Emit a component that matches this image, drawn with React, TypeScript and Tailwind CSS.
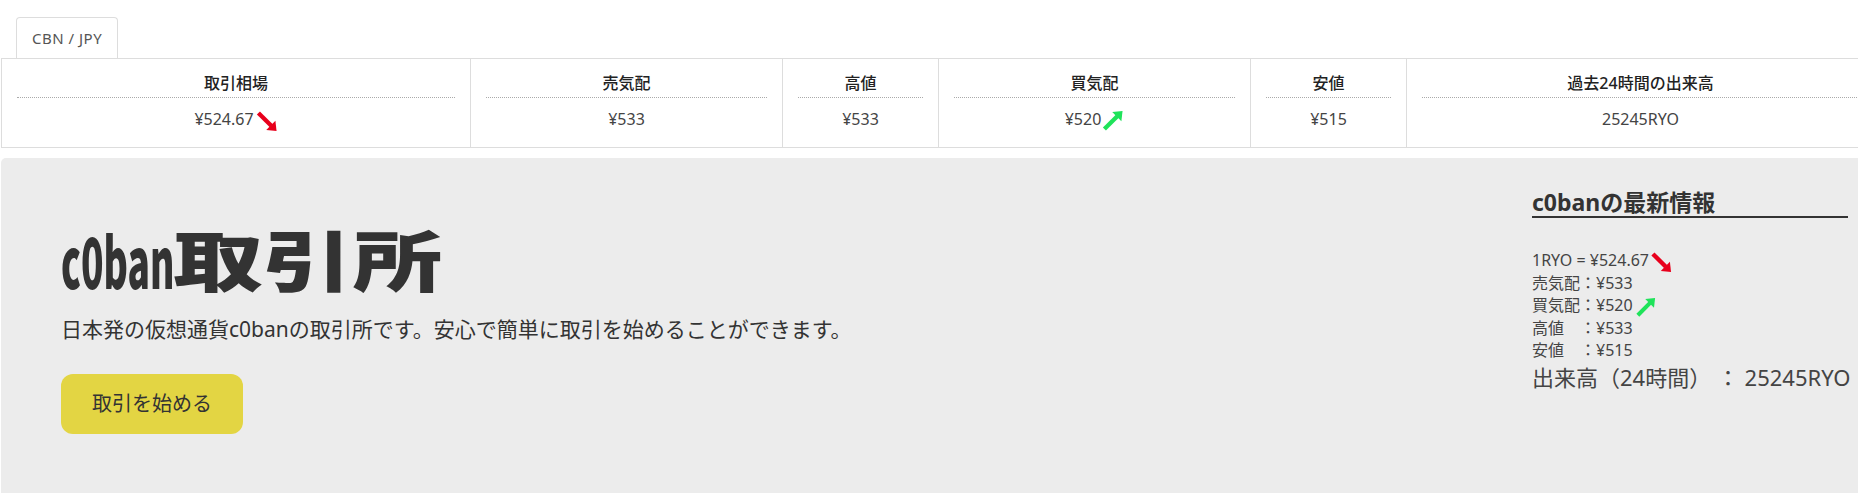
import React from "react";

function ArrowDown({ className }: { className?: string }) {
  return (
    <svg viewBox="0 0 22 22" className={className} aria-hidden="true">
      <line x1="2" y1="2" x2="15.5" y2="15.5" stroke="#e8001c" strokeWidth="4.5" />
      <polygon points="21,21 19.8,10.2 10.2,19.8" fill="#e8001c" />
    </svg>
  );
}

function ArrowUp({ className }: { className?: string }) {
  return (
    <svg viewBox="0 0 22 22" className={className} aria-hidden="true">
      <line x1="2" y1="20" x2="15.5" y2="6.5" stroke="#1fe35a" strokeWidth="4.5" />
      <polygon points="21,1 19.8,11.8 10.2,2.2" fill="#1fe35a" />
    </svg>
  );
}

const cols: { label: string; value: string; arrow?: "up" | "down" }[] = [
  { label: "取引相場", value: "¥524.67", arrow: "down" },
  { label: "売気配", value: "¥533" },
  { label: "高値", value: "¥533" },
  { label: "買気配", value: "¥520", arrow: "up" },
  { label: "安値", value: "¥515" },
  { label: "過去24時間の出来高", value: "25245RYO" },
];

export default function App() {
  return (
    <div className="w-full min-h-[493px] overflow-hidden bg-white font-['Noto_Sans','Noto_Sans_CJK_JP',sans-serif]">
      <div className="w-[1876px]">
        <div className="pt-[17px] pl-[16px] flex">
          <div className="h-[41px] px-[15px] border border-b-0 border-[#ddd] rounded-t-[4px] flex items-center text-[15px] tracking-[0.5px] text-[#555]">
            CBN / JPY
          </div>
        </div>

        <div className="ml-[1px] w-[1874px] grid grid-cols-[469px_312px_156px_312px_156px_468px] border-y border-l border-[#ddd]">
          {cols.map((c) => (
            <div key={c.label} className="h-[88px] px-[15px] border-r border-[#ddd] text-center">
              <div className="pt-[13px] pb-[3px] leading-[22px] text-[16px] font-medium text-[#222] border-b border-dotted border-[#aaa]">
                {c.label}
              </div>
              <div className="pt-[10px] leading-[22px] text-[16px] text-[#444] whitespace-nowrap">
                {c.value}
                {c.arrow === "down" && (
                  <ArrowDown className="inline-block w-[22px] h-[21px] ml-[2px] align-top translate-y-[3px]" />
                )}
                {c.arrow === "up" && (
                  <ArrowUp className="inline-block w-[22px] h-[21px] ml-[1px] align-top translate-y-[2px]" />
                )}
              </div>
            </div>
          ))}
        </div>

        <div className="mt-[10px] ml-[1px] w-[1873px] h-[340px] bg-[#ececec] rounded-[5px] flex justify-between">
          <div className="pl-[60px] pt-[66px]">
            <div className="flex items-baseline text-[#333] font-black whitespace-nowrap font-['Noto_Sans_CJK_JP',sans-serif]">
              <span className="inline-block w-[112px] text-[70px] leading-none">
                <span className="inline-block origin-left scale-x-[0.53]">c0ban</span>
              </span>
              <span className="inline-block w-[271px] text-[66px] leading-none">
                <span className="inline-block origin-left scale-x-[1.36] -translate-y-[3px]">取引所</span>
              </span>
            </div>
            <div className="mt-[20px] text-[21px] leading-[30px] text-[#333] whitespace-nowrap">
              日本発の仮想通貨c0banの取引所です。安心で簡単に取引を始めることができます。
            </div>
            <div className="mt-[30px] w-[182px] h-[60px] rounded-[12px] bg-[#e3d543] text-[20px] text-[#333] flex items-center justify-center">
              取引を始める
            </div>
          </div>

          <div className="w-[316px] mr-[26px] pt-[30px] whitespace-nowrap">
            <div className="text-[23px] font-bold leading-[28px] text-[#333] border-b-2 border-[#333]">
              c0banの最新情報
            </div>
            <div className="mt-[31px] text-[16px] leading-[22.5px] text-[#444]">
              <div>
                1RYO = ¥524.67
                <ArrowDown className="inline-block w-[21px] h-[21px] ml-[2px] align-top translate-y-[3px]" />
              </div>
              <div>売気配：¥533</div>
              <div>
                買気配：¥520
                <ArrowUp className="inline-block w-[20px] h-[20px] ml-[3px] align-top translate-y-[3px]" />
              </div>
              <div>高値　：¥533</div>
              <div>安値　：¥515</div>
              <div className="text-[22px] leading-[30px]">出来高（24時間） ： 25245RYO</div>
            </div>
          </div>
        </div>
      </div>
    </div>
  );
}
